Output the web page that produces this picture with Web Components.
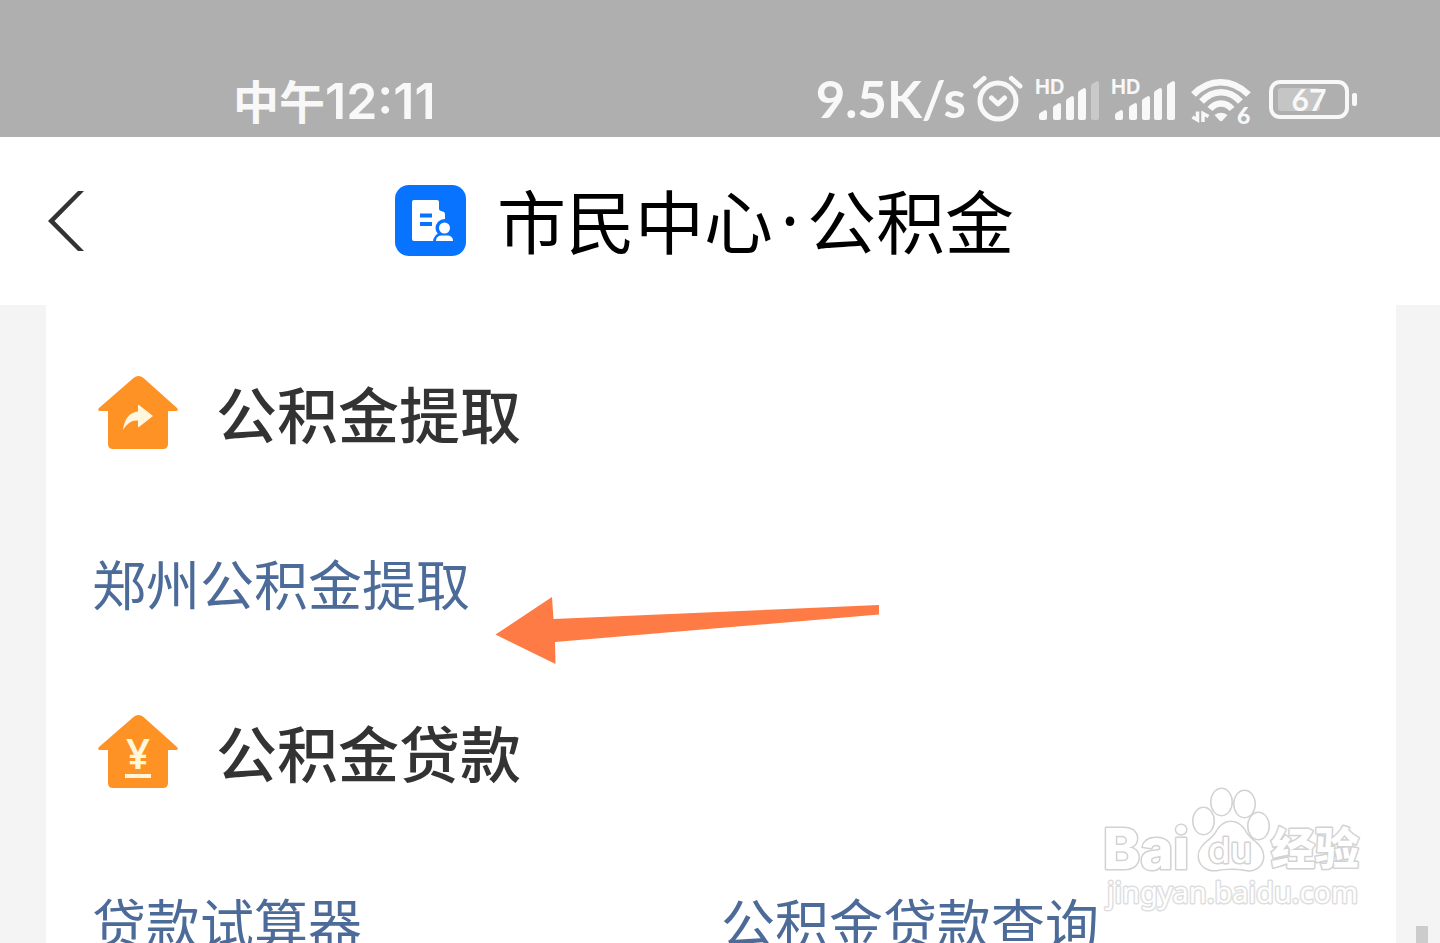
<!DOCTYPE html>
<html lang="zh-CN">
<head>
<meta charset="utf-8">
<title>市民中心·公积金</title>
<style>
  body {
    margin: 0;
    font-family: "Noto Sans CJK SC", sans-serif;
    color: #333333;
    background: #f4f4f4;
  }
</style>
</head>
<body>
<fund-app>
  <status-bar slot="top" time="中午" clock="12:11" speed="9.5K/s"></status-bar>
  <nav-header slot="top">
    <span>市民中心</span><span class="dot">·</span><span>公积金</span>
  </nav-header>
  <service-section heading="公积金提取" icon="withdraw">
    <a href="#withdraw">郑州公积金提取</a>
  </service-section>
  <service-section heading="公积金贷款" icon="loan">
    <a href="#calculator">贷款试算器</a>
    <a href="#query">公积金贷款查询</a>
  </service-section>
  <pointer-arrow slot="overlay"></pointer-arrow>
  <water-mark slot="overlay"></water-mark>
</fund-app>

<script>
const appTemplate = document.createElement("template");
appTemplate.innerHTML = `
  <style>
    :host {
      display: flex;
      flex-direction: column;
      position: relative;
      height: 100vh;
      overflow: hidden;
    }
    main {
      flex: 1 0 auto;
      display: flex;
      flex-direction: column;
      gap: 77px;
      margin: 0 44px 0 46px;
      padding: 62px 46px;
      background: #ffffff;
    }
    .thumb {
      position: absolute;
      right: 12px;
      top: 926px;
      width: 12px;
      height: 200px;
      background: #cccccc;
    }
  </style>
  <slot name="top"></slot>
  <main><slot></slot></main>
  <div class="thumb"></div>
  <slot name="overlay"></slot>
`;

class FundApp extends HTMLElement {
  constructor() {
    super();
    this.attachShadow({ mode: "open" });
    this.shadowRoot.appendChild(appTemplate.content.cloneNode(true));
  }
}

const statusTemplate = document.createElement("template");
statusTemplate.innerHTML = `
  <style>
    :host {
      display: flex;
      flex: none;
      justify-content: space-between;
      align-items: center;
      box-sizing: border-box;
      height: 137px;
      padding: 64px 82px 0 233px;
      background: #afafaf;
      color: #f8f8f8;
      font-family: Inter, "Noto Sans CJK SC", sans-serif;
      font-weight: 600;
      font-size: 50px;
      line-height: 72px;
      white-space: nowrap;
    }
    .time {
      display: flex;
      align-items: baseline;
    }
    .icons, .net {
      display: flex;
      align-items: center;
    }
    .period {
      font-family: "Noto Sans CJK SC", sans-serif;
      font-size: 46px;
      font-weight: 700;
      line-height: 56px;
    }
    .icons { gap: 10px; }
    .net { gap: 6px; }
    .speed {
      padding-bottom: 4px;
      font-family: Lato, sans-serif;
      font-weight: 700;
      font-size: 51px;
      line-height: 60px;
    }
    svg {
      display: block;
      fill: currentColor;
    }
    .line {
      fill: none;
      stroke: currentColor;
      stroke-width: 5;
      stroke-linecap: round;
      stroke-linejoin: round;
    }
    .faint { opacity: 0.35; }
    text { font-family: Lato, sans-serif; font-weight: 700; }
    .hd { font-family: Inter, sans-serif; }
  </style>
  <div class="time"><span class="period"></span><span class="clock"></span></div>
  <div class="icons">
    <div class="net">
      <span class="speed"></span>
      <svg width="52" height="56" viewBox="972 73 52 56" aria-label="闹钟">
        <circle class="line" cx="998" cy="101" r="18"/>
        <path class="line" d="M991.500 98l6.500 6 6.500-6M975.500 86l8.500-7.500M1011.500 78.500l8.500 7.500"/>
      </svg>
    </div>
    <svg class="sim1" width="66" height="56" viewBox="1034 73 66 56"></svg>
    <svg class="sim2" width="66" height="56" viewBox="1034 73 66 56"></svg>
    <svg width="66" height="56" viewBox="1186 73 66 56" aria-label="WLAN">
      <g class="line" style="stroke-linecap:butt;stroke-width:6.500">
        <path d="M1193.500 94.500C1209 78 1232 78 1248.500 94.500"/>
        <path d="M1201.500 101.500C1213 89 1229 89 1240.500 101.500"/>
        <path d="M1210 109C1216 101.500 1226 101.500 1232 109"/>
      </g>
      <path d="M1214.500 115q6.500-4.500 13 0l-5 5.500q-1.500 1.500-3 0z"/>
      <path class="line" style="stroke-width:3.500;stroke-linecap:butt;stroke-linejoin:miter" d="M1197.500 111.500v8.500l-5-3M1203 122v-8.500l5.500 3"/>
      <text x="1237" y="123.500" font-size="23" style="font-weight:900">6</text>
    </svg>
    <svg width="96" height="56" viewBox="1262 73 96 56" aria-label="电量">
      <rect x="1278" y="88" width="42" height="23" rx="3" opacity="0.3"/>
      <rect class="line" style="stroke-width:4" x="1271" y="82" width="76" height="35" rx="9"/>
      <rect x="1352" y="93" width="5" height="13" rx="2"/>
      <text x="1309" y="111" font-size="30" text-anchor="middle">67</text>
    </svg>
  </div>
`;

// left edge and top of each bar, all of them stand on y = 120
const bars = [
  [1039, 110],
  [1053, 103],
  [1066, 96],
  [1078, 88],
  [1091, 81],
];

function signal(level) {
  const shapes = bars.map(([x, y], i) => {
    const cls = i < level ? "" : "faint";
    return `<path class="${cls}" d="M${x} ${y + 5}q0-1 1-2l5-3q2 0 2 2V118q0 2-2 2h-4q-2 0-2-2z"/>`;
  });
  return `<text class="hd" x="1035" y="94" font-size="20">HD</text>${shapes.join("")}`;
}

class StatusBar extends HTMLElement {
  constructor() {
    super();
    this.attachShadow({ mode: "open" });
    this.shadowRoot.appendChild(statusTemplate.content.cloneNode(true));
  }

  connectedCallback() {
    const root = this.shadowRoot;
    root.querySelector(".period").textContent = this.getAttribute("time");
    root.querySelector(".clock").textContent = this.getAttribute("clock");
    root.querySelector(".speed").textContent = this.getAttribute("speed");
    root.querySelector(".sim1").innerHTML = signal(4);
    root.querySelector(".sim2").innerHTML = signal(5);
  }
}

const headerTemplate = document.createElement("template");
headerTemplate.innerHTML = `
  <style>
    :host {
      display: flex;
      flex: none;
      align-items: center;
      box-sizing: border-box;
      height: 168px;
      padding: 0 116px 0 47px;
      background: #ffffff;
      color: #000000;
    }
    button {
      padding: 0;
      border: 0;
      background: none;
      cursor: pointer;
    }
    svg { display: block; }
    .title {
      flex: 1;
      display: flex;
      justify-content: center;
      align-items: center;
      gap: 31px;
    }
    h1 {
      display: flex;
      margin: 0;
      padding-bottom: 4px;
      font-size: 69px;
      font-weight: 400;
      line-height: 96px;
      white-space: nowrap;
    }
    ::slotted(.dot) {
      display: flex;
      justify-content: center;
      width: 34px;
      font-family: "Noto Sans", sans-serif;
    }
  </style>
  <button type="button" aria-label="返回">
    <svg width="38" height="62" viewBox="47 190 38 62">
      <path d="M78 191h6L54.500 221 84 251h-6L48 221z" fill="#333333"/>
    </svg>
  </button>
  <div class="title">
    <svg width="71" height="72" viewBox="395 185 71 72">
      <rect x="395" y="185" width="71" height="71" rx="14" fill="#0873ff"/>
      <path d="M414 200h23q2 0 2 2v7q0 1.500 2 2 4 .5 4 3v16l-8 11h-23q-2 0-2-2v-37q0-2 2-2z" fill="#ffffff"/>
      <circle cx="444.500" cy="228" r="9" fill="#0873ff"/>
      <path d="M433 243q0-10 10-11h12v11z" fill="#0873ff"/>
      <circle cx="444.500" cy="228" r="5.500" fill="#ffffff"/>
      <path d="M436 241q0-5.500 6-5.500h5q6 0 6 5.500z" fill="#ffffff"/>
      <path d="M420 213.500h12v4h-12zM420 222h12v4h-12z" fill="#0873ff"/>
    </svg>
    <h1><slot></slot></h1>
  </div>
`;

class NavHeader extends HTMLElement {
  constructor() {
    super();
    this.attachShadow({ mode: "open" });
    this.shadowRoot.appendChild(headerTemplate.content.cloneNode(true));
    this.shadowRoot.querySelector("button").addEventListener("click", () => history.back());
  }
}

const ICONS = {
  withdraw: `<path d="M31 54q2-17 15-18.500v-6q0-1 1-.5l14 11-14 11q-1 .5-1-.5v-6q-9-1-15 9.500z" fill="#fff6dc"/>`,
  loan: `
    <text x="46" y="54" text-anchor="middle" font-size="42" font-weight="600" fill="#fff6dc">¥</text>
    <path d="M33 59h26v4h-26z" fill="#fff6dc"/>`,
};

const sectionTemplate = document.createElement("template");
sectionTemplate.innerHTML = `
  <style>
    :host {
      display: flex;
      flex-direction: column;
      gap: 78px;
    }
    header {
      display: flex;
      align-items: center;
      gap: 32px;
    }
    svg {
      display: block;
      font-family: "Noto Sans", sans-serif;
    }
    h2 {
      margin: 0;
      font-size: 61px;
      font-weight: 500;
      line-height: 92px;
    }
    nav {
      display: grid;
      grid-template-columns: 1fr 1fr;
      font-size: 54px;
      line-height: 92px;
      white-space: nowrap;
    }
    ::slotted(a) {
      color: #4c6b99;
      text-decoration: none;
    }
  </style>
  <header>
    <svg width="92" height="80" viewBox="0 -3 92 80" aria-hidden="true">
      <path d="M41.500 2q5-4 10 0L85 32q2 3-1 3h-8v33q0 5-5 5H21q-5 0-5-5V35H8q-3 0-1-3z" fill="#ff9225"/>
      <g class="glyph"></g>
    </svg>
    <h2></h2>
  </header>
  <nav><slot></slot></nav>
`;

class ServiceSection extends HTMLElement {
  constructor() {
    super();
    this.attachShadow({ mode: "open" });
    this.shadowRoot.appendChild(sectionTemplate.content.cloneNode(true));
  }

  connectedCallback() {
    this.shadowRoot.querySelector("h2").textContent = this.getAttribute("heading");
    this.shadowRoot.querySelector(".glyph").innerHTML = ICONS[this.getAttribute("icon")];
  }
}

class PointerArrow extends HTMLElement {
  constructor() {
    super();
    this.attachShadow({ mode: "open" });
    this.shadowRoot.innerHTML = `
      <style>
        :host {
          position: absolute;
          left: 495px;
          top: 596px;
          pointer-events: none;
        }
        svg { display: block; }
      </style>
      <svg width="386" height="70" viewBox="495 596 386 70" aria-hidden="true">
        <path d="M495.500 634.500L552 597l1.500 22L879 605v9.500L555 642l.5 22z" fill="#ff7b45"/>
      </svg>
    `;
  }
}

class WaterMark extends HTMLElement {
  constructor() {
    super();
    this.attachShadow({ mode: "open" });
    this.shadowRoot.innerHTML = `
      <style>
        :host {
          position: absolute;
          right: 70px;
          top: 780px;
          pointer-events: none;
        }
        svg {
          display: block;
          fill: #ffffff;
          stroke: #d2d2d2;
          stroke-width: 3;
          stroke-linejoin: round;
          paint-order: stroke;
          font-family: Inter, sans-serif;
          font-weight: 800;
        }
        .du { font-weight: 500; }
        .cjk { font-family: "Noto Sans CJK SC", sans-serif; font-weight: 900; }
        .url { font-family: "Noto Sans", sans-serif; font-weight: 400; stroke: #dedede; }
      </style>
      <svg width="270" height="140" viewBox="0 0 270 140">
        <ellipse cx="121.500" cy="22" rx="10" ry="13"/>
        <ellipse cx="144.500" cy="24" rx="10" ry="13"/>
        <ellipse cx="103.500" cy="41" rx="10" ry="13"/>
        <ellipse cx="158.500" cy="46" rx="10" ry="13"/>
        <path d="M131 42c7 0 12 5 15 11 5 8 17 12 17 23 0 10-8 15-16 14-11-2-21-2-31 0-9 1-17-5-17-14 0-11 12-15 17-23 3-6 8-11 15-11z"/>
        <text x="3" y="89" font-size="56">Bai</text>
        <text class="du" x="108" y="83" font-size="36">du</text>
        <text class="cjk" x="171" y="85" font-size="44">经验</text>
        <text class="url" x="7" y="123" font-size="29">jingyan.baidu.com</text>
      </svg>
    `;
  }
}

customElements.define("fund-app", FundApp);
customElements.define("status-bar", StatusBar);
customElements.define("nav-header", NavHeader);
customElements.define("service-section", ServiceSection);
customElements.define("pointer-arrow", PointerArrow);
customElements.define("water-mark", WaterMark);
</script>
</body>
</html>
